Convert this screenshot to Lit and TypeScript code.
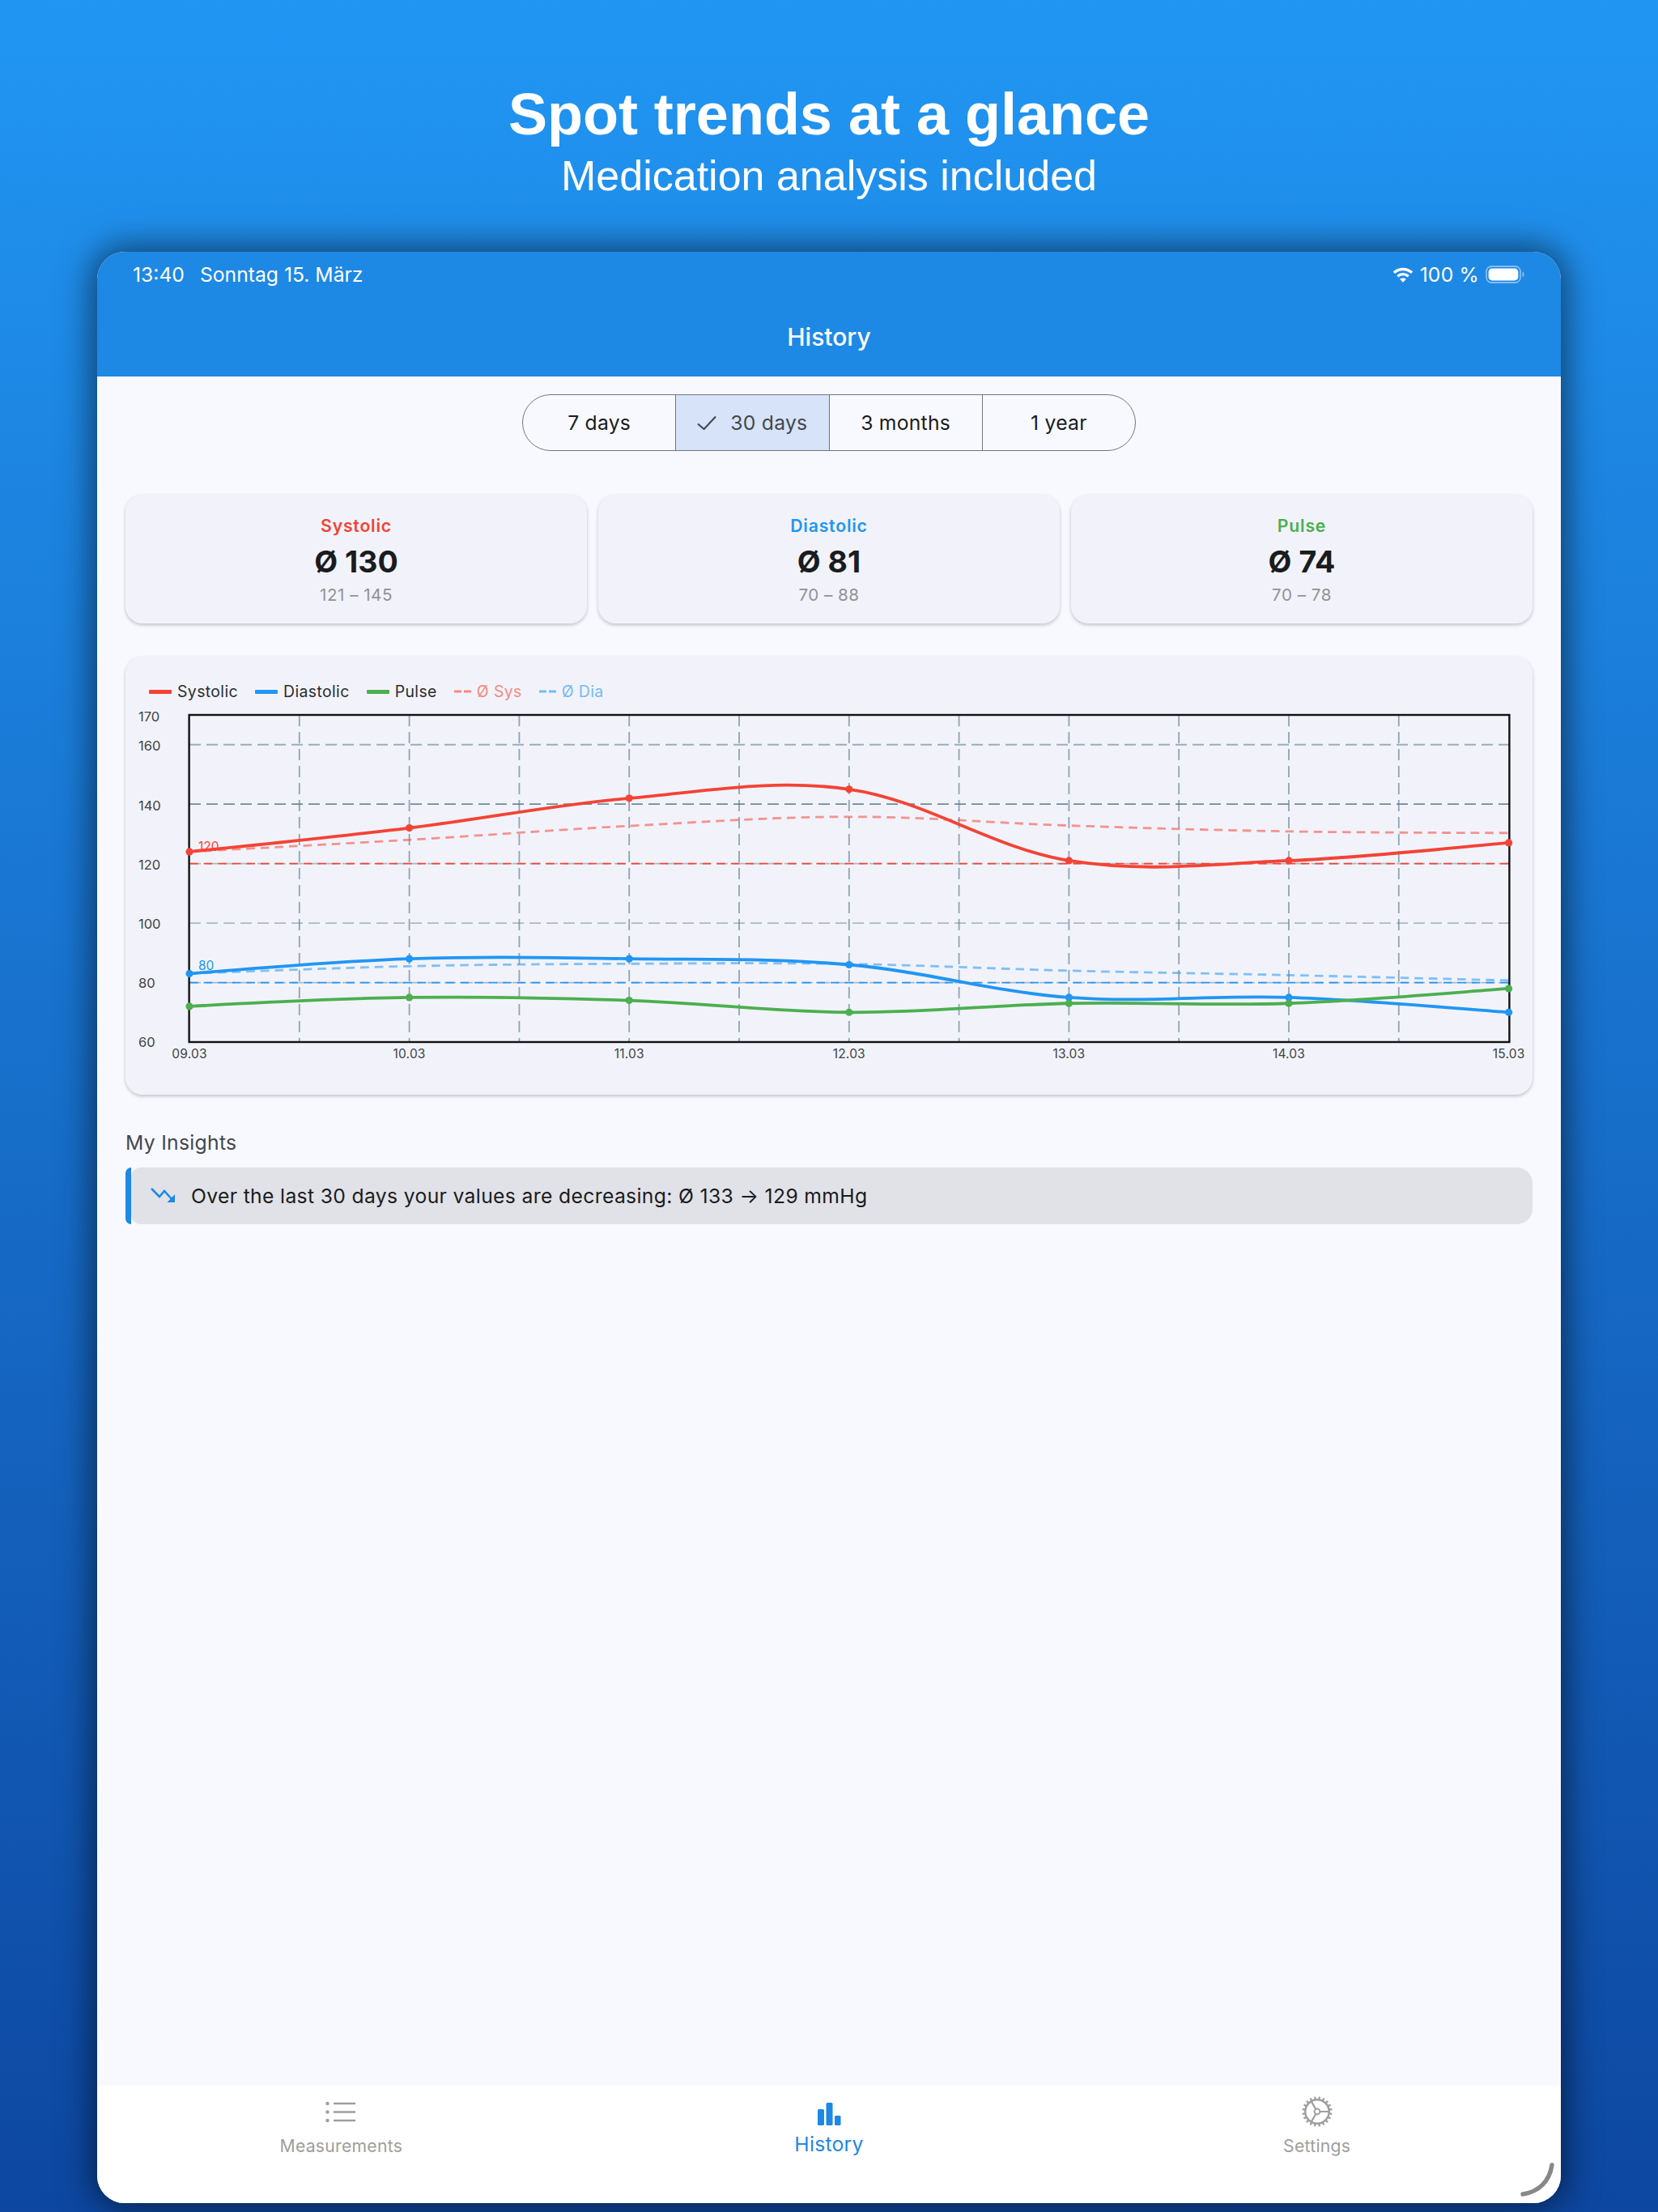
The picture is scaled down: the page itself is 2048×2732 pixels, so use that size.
import { LitElement, html, css, svg } from "lit";
import { customElement } from "lit/decorators.js";

const X0 = 233;
const XW = 135.8;
const xAt = (i: number) => X0 + XW * i;
const yAt = (v: number) => 1287 - (v - 60) * 3.6727;

const SYS = [124, 132, 142, 145, 121, 121, 127];
const DIA = [83, 88, 88, 86, 75, 75, 70];
const PUL = [72, 75, 74, 70, 73, 73, 78];
const AVG_SYS = [124, 128, 132.67, 135.75, 132.8, 130.83, 130.29];
const AVG_DIA = [83, 85.5, 86.33, 86.25, 84, 82.5, 80.71];
const DATES = ["09.03", "10.03", "11.03", "12.03", "13.03", "14.03", "15.03"];

function curve(vals: number[]): string {
  const pts = vals.map((v, i) => [xAt(i * 2), yAt(v)]);
  const s = 0.35;
  let d = `M${pts[0][0]} ${pts[0][1]}`;
  let t = [0, 0];
  for (let i = 1; i < pts.length; i++) {
    const prev = pts[i - 1];
    const cur = pts[i];
    const next = pts[Math.min(i + 1, pts.length - 1)];
    const c1 = [prev[0] + t[0], prev[1] + t[1]];
    t = [((next[0] - prev[0]) / 2) * s, ((next[1] - prev[1]) / 2) * s];
    const c2 = [cur[0] - t[0], cur[1] - t[1]];
    d += `C${c1[0]} ${c1[1]} ${c2[0]} ${c2[1]} ${cur[0]} ${cur[1]}`;
  }
  return d;
}

@customElement("trend-chart")
class TrendChart extends LitElement {
  static styles = css`
    :host { display: block; }
    svg { display: block; width: 1739px; height: 482px; }
    text { font-family: Inter, "Liberation Sans", sans-serif; }
    .axis { font-size: 16.5px; fill: #3f4247; dominant-baseline: central; }
    .xlab { font-size: 15.5px; fill: #3f4247; text-anchor: middle; dominant-baseline: central; letter-spacing: 0.2px; }
    .grid { stroke: #5e7f90; stroke-width: 1.8; stroke-dasharray: 14 7; fill: none; }
    .thr { stroke-width: 1.7; stroke-dasharray: 10.6 7; }
    .line { fill: none; stroke-width: 3.8; }
    .avg { fill: none; stroke-width: 2.8; stroke-dasharray: 10.6 7; opacity: 0.55; }
    .frame { fill: none; stroke: #111; stroke-width: 2.4; }
    .tl { font-size: 15.5px; dominant-baseline: central; }
    .sys { stroke: #f44336; }
    .dia { stroke: #2196f3; }
    .pul { stroke: #4caf50; }
    .tsys { fill: #f44336; }
    .tdia { fill: #2196f3; }
  `;

  private series(vals: number[], cls: string, fill: string) {
    return svg`
      <path class="line ${cls}" d=${curve(vals)}></path>
      ${vals.map((v, i) => svg`<circle cx=${xAt(i * 2)} cy=${yAt(v)} r="4.6" fill=${fill}></circle>`)}
    `;
  }

  render() {
    const hs: [number, number][] = [[160, 0.6], [140, 0.9], [120, 0.5], [100, 0.5], [80, 0.5]];
    const ylabs: [string, number][] = [["170", 885], ["160", 921], ["140", 995], ["120", 1068], ["100", 1141], ["80", 1214], ["60", 1287]];
    const vs = Array.from({ length: 11 }, (_, i) => i + 1);
    return html`<svg viewBox="154 870 1739 482">
      ${vs.map((i) => svg`<line class="grid" x1=${xAt(i)} x2=${xAt(i)} y1="883" y2="1287" opacity="0.68"></line>`)}
      ${hs.map(([v, o]) => svg`<line class="grid" x1=${X0} x2="1863" y1=${yAt(v)} y2=${yAt(v)} opacity=${o}></line>`)}
      <line class="thr sys" x1=${X0} x2="1863" y1=${yAt(120)} y2=${yAt(120)}></line>
      <line class="thr dia" x1=${X0} x2="1863" y1=${yAt(80)} y2=${yAt(80)}></line>
      <rect class="frame" x="232.6" y="883" width="1630.8" height="404"></rect>
      <text class="tl tsys" x="244" y="1045">120</text>
      <text class="tl tdia" x="244" y="1192">80</text>
      <path class="avg sys" d=${curve(AVG_SYS)}></path>
      <path class="avg dia" d=${curve(AVG_DIA)}></path>
      ${this.series(SYS, "sys", "#f44336")}
      ${this.series(DIA, "dia", "#2196f3")}
      ${this.series(PUL, "pul", "#4caf50")}
      ${ylabs.map(([t, y]) => svg`<text class="axis" x="170" y=${y}>${t}</text>`)}
      ${DATES.map((t, i) => svg`<text class="xlab" x=${xAt(i * 2)} y="1301">${t}</text>`)}
    </svg>`;
  }
}

@customElement("app-root")
class AppRoot extends LitElement {
  static styles = css`
    :host {
      display: block;
      width: 2048px;
      height: 2732px;
      overflow: hidden;
      background: linear-gradient(180deg, #2196f3 0%, #0d47a1 100%);
      font-family: Inter, "Liberation Sans", sans-serif;
    }
    .hero {
      height: 311px;
      box-sizing: border-box;
      padding-top: 99px;
      text-align: center;
      color: #fff;
      font-family: "Liberation Sans", Arial, sans-serif;
    }
    .hero h1 { margin: 0; font-size: 72px; line-height: 84px; font-weight: 700; }
    .hero p { margin: 0; font-size: 52px; line-height: 68px; font-weight: 400; }
    .device {
      margin: 0 120px;
      height: 2410px;
      border-radius: 34px;
      overflow: hidden;
      background: #f8f9ff;
      display: flex;
      flex-direction: column;
      box-shadow: 0 0 42px 6px rgba(0, 0, 0, 0.55);
    }
    .top { background: #1e88e5; color: #fff; }
    .status {
      height: 56px;
      box-sizing: border-box;
      padding: 0 45px 0 44px;
      display: flex;
      align-items: center;
      font-size: 24.7px;
      color: #fff;
    }
    .date { margin-left: 19px; flex: 1; }
    .pct { margin: 0 8px 0 8px; letter-spacing: 0.2px; }
    .appbar {
      height: 98px;
      display: flex;
      align-items: center;
      justify-content: center;
      font-size: 30px;
      font-weight: 500;
    }
    .body {
      flex: 1;
      padding: 22px 35px 0;
      display: flex;
      flex-direction: column;
    }
    .seg {
      align-self: center;
      display: flex;
      height: 70px;
      box-sizing: border-box;
      width: 758px;
      border: 1.8px solid #73767c;
      border-radius: 35px;
      overflow: hidden;
    }
    .seg-item {
      flex: 1;
      display: flex;
      align-items: center;
      justify-content: center;
      gap: 17px;
      font-size: 24.7px;
      letter-spacing: 0.25px;
      color: #1a1c20;
      border-right: 1.8px solid #73767c;
    }
    .seg-item:last-child { border-right: 0; }
    .seg-item.on { background: #d6e3f8; color: #44474e; }
    .stats { display: flex; gap: 14px; margin-top: 54px; }
    .stat {
      flex: 1;
      height: 159px;
      box-sizing: border-box;
      border-radius: 21px;
      background: #f2f3fa;
      box-shadow: 0 2px 4px rgba(0, 0, 0, 0.22);
      display: flex;
      flex-direction: column;
      align-items: center;
      padding-top: 26px;
    }
    .stat .name { font-size: 21.2px; font-weight: 600; line-height: 24px; letter-spacing: 0.8px; }
    .stat .val { font-size: 37.5px; font-weight: 700; line-height: 46px; margin-top: 10px; color: #1a1c20; }
    .stat .rng { font-size: 20.6px; line-height: 24px; margin-top: 6px; color: #909296; letter-spacing: 0.5px; }
    .red { color: #f44336; }
    .blue { color: #2196f3; }
    .green { color: #4caf50; }
    .chart {
      margin-top: 41px;
      height: 541px;
      box-sizing: border-box;
      padding-top: 32px;
      border-radius: 21px;
      background: #f2f3fa;
      box-shadow: 0 2px 4px rgba(0, 0, 0, 0.22);
    }
    .legend {
      display: flex;
      align-items: center;
      height: 22px;
      margin: 0 0 5px 29px;
      font-size: 19.4px;
      letter-spacing: 0.4px;
      color: #2a2d32;
    }
    .lg { display: flex; align-items: center; gap: 7px; margin-right: 21px; }
    .swatch { width: 28px; height: 5px; border-radius: 1px; }
    .sw-red { background: #f44336; }
    .sw-blue { background: #2196f3; }
    .sw-green { background: #4caf50; }
    .dash { display: block; }
    .fade-red { color: #f48a82; }
    .fade-blue { color: #72bbf5; }
    .section { margin: 47px 0 0 0; font-size: 24.7px; line-height: 24px; letter-spacing: 0.3px; color: #44474e; }
    .insight { display: flex; height: 70px; margin-top: 19px; }
    .insight-bar { width: 7px; background: #1e88e5; border-radius: 7px 0 0 7px; }
    .insight-box {
      flex: 1;
      background: #e1e2e8;
      border-radius: 0 19px 19px 0;
      border-top-left-radius: 12px;
      border-bottom-left-radius: 12px;
      display: flex;
      align-items: center;
      padding-left: 24px;
      gap: 18px;
      font-size: 24.7px;
      letter-spacing: 0.35px;
      color: #1a1c20;
    }
    .nav {
      position: relative;
      height: 145px;
      background: #fff;
      display: flex;
    }
    .nav-item {
      flex: 1;
      display: flex;
      flex-direction: column;
      align-items: center;
      padding-top: 12px;
      box-sizing: border-box;
      color: #9e9e9e;
    }
    .nav-item svg { display: block; }
    .nav-label { margin-top: 10px; font-size: 21.2px; line-height: 24px; letter-spacing: 0.25px; }
    .nav-item.on { color: #1e88e5; }
    .nav-item.on .nav-label { font-size: 24.7px; line-height: 20px; }
    .corner { position: absolute; right: 0; bottom: 0; }
  `;

  private stat(name: string, cls: string, val: string, rng: string) {
    return html`<div class="stat">
      <div class="name ${cls}">${name}</div>
      <div class="val">${val}</div>
      <div class="rng">${rng}</div>
    </div>`;
  }

  private gear() {
    const teeth = Array.from({ length: 20 }, (_, i) => (i * 18 * Math.PI) / 180 + 0.16);
    return html`<svg width="44" height="40" viewBox="0 0 44 42" fill="none" stroke="currentColor">
      <circle cx="22" cy="21" r="15.5" stroke-width="2.6"></circle>
      ${teeth.map((a) => svg`<line x1=${22 + 15.5 * Math.cos(a)} y1=${21 + 15.5 * Math.sin(a)} x2=${22 + 19.5 * Math.cos(a)} y2=${21 + 19.5 * Math.sin(a)} stroke-width="2.4"></line>`)}
      <circle cx="22" cy="21" r="3.6" stroke-width="2"></circle>
      <path d="M25.6 21H37M20.2 24.1L14.2 34.5M20.2 17.9L14.2 7.5" stroke-width="2.3"></path>
    </svg>`;
  }

  render() {
    return html`
      <div class="hero">
        <h1>Spot trends at a glance</h1>
        <p>Medication analysis included</p>
      </div>
      <div class="device">
        <div class="top">
          <div class="status">
            <span>13:40</span>
            <span class="date">Sonntag 15. März</span>
            <svg width="26" height="19" viewBox="0 0 25 19" fill="none" stroke="#fff" stroke-width="3.4">
              <path d="M1.4 6.8C7.6 1 17.4 1 23.6 6.8"></path>
              <path d="M5.8 11.2C9.6 7.8 15.4 7.8 19.2 11.2"></path>
              <path d="M12.5 18.8L8.6 14.8C10.8 13 14.2 13 16.4 14.8Z" fill="#fff" stroke="none"></path>
            </svg>
            <span class="pct">100 %</span>
            <svg width="48" height="22" viewBox="0 0 48 22">
              <rect x="1" y="1" width="42" height="20" rx="6.5" fill="none" stroke="#fff" stroke-opacity="0.45" stroke-width="1.8"></rect>
              <rect x="3.6" y="3.6" width="36.8" height="14.8" rx="4.4" fill="#fff"></rect>
              <path d="M45.6 7.6C47 8.2 47.6 9.5 47.6 11S47 13.8 45.6 14.4Z" fill="#fff" fill-opacity="0.5"></path>
            </svg>
          </div>
          <div class="appbar">History</div>
        </div>
        <div class="body">
          <div class="seg">
            <div class="seg-item">7 days</div>
            <div class="seg-item on">
              <svg width="24" height="18" viewBox="0 0 24 18" fill="none" stroke="currentColor" stroke-width="2.1">
                <path d="M1 10.5L8.6 17L23 1.5"></path>
              </svg>
              30 days
            </div>
            <div class="seg-item">3 months</div>
            <div class="seg-item">1 year</div>
          </div>
          <div class="stats">
            ${this.stat("Systolic", "red", "Ø 130", "121 – 145")}
            ${this.stat("Diastolic", "blue", "Ø 81", "70 – 88")}
            ${this.stat("Pulse", "green", "Ø 74", "70 – 78")}
          </div>
          <div class="chart">
            <div class="legend">
              <div class="lg"><span class="swatch sw-red"></span>Systolic</div>
              <div class="lg"><span class="swatch sw-blue"></span>Diastolic</div>
              <div class="lg"><span class="swatch sw-green"></span>Pulse</div>
              <div class="lg fade-red">
                <svg class="dash" width="21" height="4"><path d="M0 2H9M12 2H21" stroke="#f48a82" stroke-width="3"></path></svg>Ø Sys
              </div>
              <div class="lg fade-blue">
                <svg class="dash" width="21" height="4"><path d="M0 2H9M12 2H21" stroke="#72bbf5" stroke-width="3"></path></svg>Ø Dia
              </div>
            </div>
            <trend-chart></trend-chart>
          </div>
          <div class="section">My Insights</div>
          <div class="insight">
            <div class="insight-bar"></div>
            <div class="insight-box">
              <svg width="32" height="22" viewBox="0 0 32 22">
                <path d="M1 2L11 12L17 5L27 16" fill="none" stroke="#1e88e5" stroke-width="2.6"></path>
                <path d="M30 9V19H20.5Z" fill="#1e88e5"></path>
              </svg>
              <span>Over the last 30 days your values are decreasing: Ø 133 → 129 mmHg</span>
            </div>
          </div>
        </div>
        <div class="nav">
          <div class="nav-item">
            <svg width="44" height="40" viewBox="0 0 44 40" fill="none" stroke="currentColor">
              <path d="M13 10H40M13 20.5H40M13 31H40" stroke-width="2.6"></path>
              <circle cx="5.5" cy="10" r="2.2" fill="currentColor" stroke="none"></circle>
              <circle cx="5.5" cy="20.5" r="2.2" fill="currentColor" stroke="none"></circle>
              <circle cx="5.5" cy="31" r="2.2" fill="currentColor" stroke="none"></circle>
            </svg>
            <div class="nav-label">Measurements</div>
          </div>
          <div class="nav-item on">
            <svg width="44" height="40" viewBox="0 0 44 40" fill="currentColor">
              <rect x="8" y="17" width="8" height="20" rx="1.6"></rect>
              <rect x="18.5" y="9" width="8" height="28" rx="1.6"></rect>
              <rect x="29" y="25" width="7.5" height="12" rx="1.6"></rect>
            </svg>
            <div class="nav-label">History</div>
          </div>
          <div class="nav-item">
            ${this.gear()}
            <div class="nav-label">Settings</div>
          </div>
          <svg class="corner" width="60" height="60" viewBox="0 0 60 60" fill="none">
            <path d="M49 13C46 33 33 46 13 49" stroke="#888" stroke-width="5.4" stroke-linecap="round"></path>
          </svg>
        </div>
      </div>
    `;
  }
}
